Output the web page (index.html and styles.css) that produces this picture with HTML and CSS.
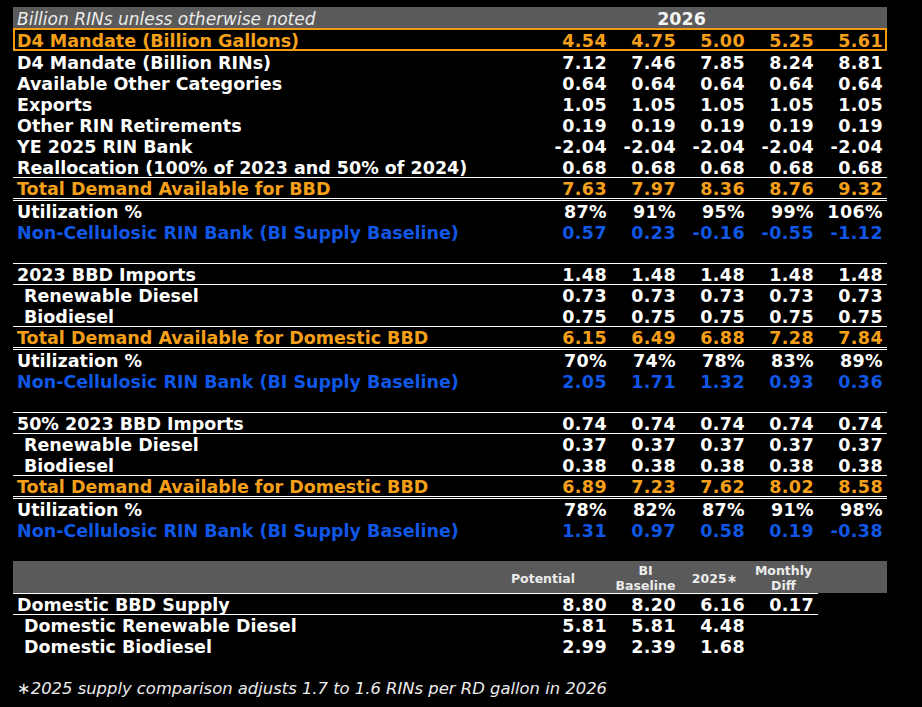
FILE: index.html
```html
<!DOCTYPE html>
<html>
<head>
<meta charset="utf-8">
<link rel="stylesheet" href="styles.css">
</head>
<body>
<div class="sheet">
  <div class="hdr">
    <div class="lbl note">Billion RINs unless otherwise noted</div>
    <div class="year">2026</div>
  </div>
  <div class="row hl orange"><div class="lbl">D4 Mandate (Billion Gallons)</div><div class="n">4.54</div><div class="n">4.75</div><div class="n">5.00</div><div class="n">5.25</div><div class="n">5.61</div></div>
  <div class="row"><div class="lbl">D4 Mandate (Billion RINs)</div><div class="n">7.12</div><div class="n">7.46</div><div class="n">7.85</div><div class="n">8.24</div><div class="n">8.81</div></div>
  <div class="row"><div class="lbl">Available Other Categories</div><div class="n">0.64</div><div class="n">0.64</div><div class="n">0.64</div><div class="n">0.64</div><div class="n">0.64</div></div>
  <div class="row"><div class="lbl">Exports</div><div class="n">1.05</div><div class="n">1.05</div><div class="n">1.05</div><div class="n">1.05</div><div class="n">1.05</div></div>
  <div class="row"><div class="lbl">Other RIN Retirements</div><div class="n">0.19</div><div class="n">0.19</div><div class="n">0.19</div><div class="n">0.19</div><div class="n">0.19</div></div>
  <div class="row"><div class="lbl">YE 2025 RIN Bank</div><div class="n">-2.04</div><div class="n">-2.04</div><div class="n">-2.04</div><div class="n">-2.04</div><div class="n">-2.04</div></div>
  <div class="row"><div class="lbl">Reallocation (100% of 2023 and 50% of 2024)</div><div class="n">0.68</div><div class="n">0.68</div><div class="n">0.68</div><div class="n">0.68</div><div class="n">0.68</div></div>
  <div class="row bt orange"><div class="lbl">Total Demand Available for BBD</div><div class="n">7.63</div><div class="n">7.97</div><div class="n">8.36</div><div class="n">8.76</div><div class="n">9.32</div></div>
  <div class="row dbl"><div class="lbl">Utilization %</div><div class="n">87%</div><div class="n">91%</div><div class="n">95%</div><div class="n">99%</div><div class="n">106%</div></div>
  <div class="row blue"><div class="lbl">Non-Cellulosic RIN Bank (BI Supply Baseline)</div><div class="n">0.57</div><div class="n">0.23</div><div class="n">-0.16</div><div class="n">-0.55</div><div class="n">-1.12</div></div>
  <div class="blank"></div>

  <div class="row bt"><div class="lbl">2023 BBD Imports</div><div class="n">1.48</div><div class="n">1.48</div><div class="n">1.48</div><div class="n">1.48</div><div class="n">1.48</div></div>
  <div class="row bt ind"><div class="lbl">Renewable Diesel</div><div class="n">0.73</div><div class="n">0.73</div><div class="n">0.73</div><div class="n">0.73</div><div class="n">0.73</div></div>
  <div class="row ind"><div class="lbl">Biodiesel</div><div class="n">0.75</div><div class="n">0.75</div><div class="n">0.75</div><div class="n">0.75</div><div class="n">0.75</div></div>
  <div class="row bt orange"><div class="lbl">Total Demand Available for Domestic BBD</div><div class="n">6.15</div><div class="n">6.49</div><div class="n">6.88</div><div class="n">7.28</div><div class="n">7.84</div></div>
  <div class="row dbl"><div class="lbl">Utilization %</div><div class="n">70%</div><div class="n">74%</div><div class="n">78%</div><div class="n">83%</div><div class="n">89%</div></div>
  <div class="row blue"><div class="lbl">Non-Cellulosic RIN Bank (BI Supply Baseline)</div><div class="n">2.05</div><div class="n">1.71</div><div class="n">1.32</div><div class="n">0.93</div><div class="n">0.36</div></div>
  <div class="blank"></div>

  <div class="row bt"><div class="lbl">50% 2023 BBD Imports</div><div class="n">0.74</div><div class="n">0.74</div><div class="n">0.74</div><div class="n">0.74</div><div class="n">0.74</div></div>
  <div class="row bt ind"><div class="lbl">Renewable Diesel</div><div class="n">0.37</div><div class="n">0.37</div><div class="n">0.37</div><div class="n">0.37</div><div class="n">0.37</div></div>
  <div class="row ind"><div class="lbl">Biodiesel</div><div class="n">0.38</div><div class="n">0.38</div><div class="n">0.38</div><div class="n">0.38</div><div class="n">0.38</div></div>
  <div class="row bt orange"><div class="lbl">Total Demand Available for Domestic BBD</div><div class="n">6.89</div><div class="n">7.23</div><div class="n">7.62</div><div class="n">8.02</div><div class="n">8.58</div></div>
  <div class="row dbl"><div class="lbl">Utilization %</div><div class="n">78%</div><div class="n">82%</div><div class="n">87%</div><div class="n">91%</div><div class="n">98%</div></div>
  <div class="row blue"><div class="lbl">Non-Cellulosic RIN Bank (BI Supply Baseline)</div><div class="n">1.31</div><div class="n">0.97</div><div class="n">0.58</div><div class="n">0.19</div><div class="n">-0.38</div></div>
  <div class="blank"></div>

  <div class="hdr2">
    <div class="lbl"></div>
    <div class="h pot">Potential</div>
    <div class="h">BI<br>Baseline</div>
    <div class="h">2025∗</div>
    <div class="h">Monthly<br>Diff</div>
    <div class="h"></div>
  </div>
  <div class="row short bt"><div class="lbl">Domestic BBD Supply</div><div class="n">8.80</div><div class="n">8.20</div><div class="n">6.16</div><div class="n">0.17</div></div>
  <div class="row short bt ind"><div class="lbl">Domestic Renewable Diesel</div><div class="n">5.81</div><div class="n">5.81</div><div class="n">4.48</div><div class="n"></div></div>
  <div class="row short ind"><div class="lbl">Domestic Biodiesel</div><div class="n">2.99</div><div class="n">2.39</div><div class="n">1.68</div><div class="n"></div></div>
  <div class="blank"></div>
  <div class="foot">∗2025 supply comparison adjusts 1.7 to 1.6 RINs per RD gallon in 2026</div>
</div>
</body>
</html>
```

FILE: styles.css
```css
html, body {
  margin: 0;
  padding: 0;
  background: #000;
}

body {
  font-family: "DejaVu Sans", Verdana, sans-serif;
  font-size: 17.5px;
  font-weight: bold;
  color: #ffffff;
}

.sheet {
  margin: 7px 0 0 13px;
  width: 874px;
}

.hdr {
  display: flex;
  height: 21px;
  line-height: 24px;
  background: #5a5a5a;
}

.hdr .lbl {
  flex: 1;
  padding-left: 4px;
  white-space: nowrap;
}

.note {
  font-style: italic;
  font-weight: normal;
  font-size: 17px;
  color: #ececec;
}

.year {
  width: 345px;
  box-sizing: border-box;
  padding-right: 66px;
  text-align: center;
  color: #f4f4f4;
}

.row {
  display: flex;
  height: 21px;
  line-height: 24px;
  box-sizing: border-box;
  white-space: nowrap;
}

.row .lbl {
  flex: 1;
  padding-left: 4px;
}

.row .n {
  width: 69px;
  box-sizing: border-box;
  padding-right: 4px;
  text-align: right;
  letter-spacing: 0.4px;
}

.row.ind .lbl {
  padding-left: 11px;
}

.hl {
  border: 2px solid #f39c12;
  height: 23px;
  line-height: 22px;
}

.hl .lbl {
  padding-left: 2px;
}

.row.hl .n {
  padding-right: 2px;
}

.bt {
  border-top: 1px solid #ffffff;
  line-height: 23px;
}

.dbl {
  border-top: 3px double #ffffff;
  height: 23px;
  line-height: 23px;
}

.orange {
  color: #f6a01a;
}

.blue {
  color: #1157e6;
}

.blank {
  height: 21px;
}

.hdr2 {
  display: flex;
  align-items: center;
  height: 32px;
  padding-top: 2px;
  box-sizing: border-box;
  background: #5a5a5a;
  font-size: 12.5px;
  line-height: 15px;
  color: #ececec;
}

.hdr2 .lbl {
  flex: 1;
}

.hdr2 .h {
  width: 69px;
  text-align: center;
}

.hdr2 .pot {
  text-align: right;
  padding-right: 36px;
  box-sizing: border-box;
  white-space: nowrap;
  direction: rtl;
}

.short {
  width: 805px;
}

.foot {
  height: 21px;
  line-height: 24px;
  padding-left: 4px;
  font-style: italic;
  font-weight: normal;
  font-size: 16.4px;
  color: #ececec;
  white-space: nowrap;
}
```
